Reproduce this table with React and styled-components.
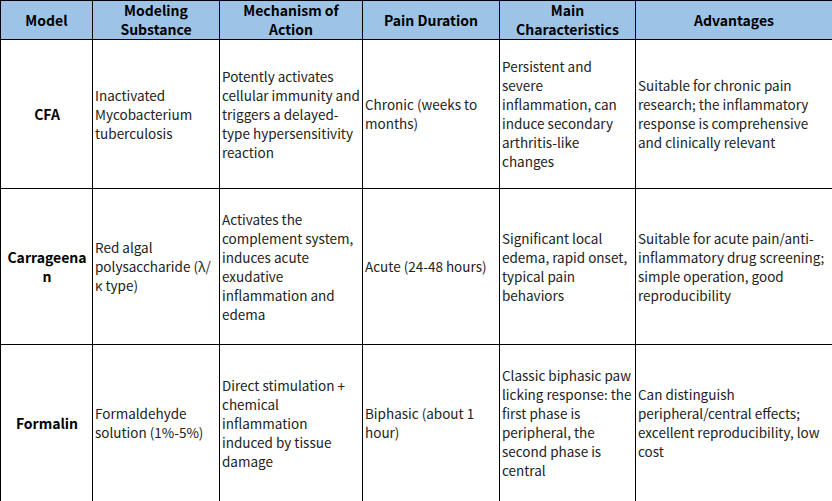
import React from 'react';
import styled, { createGlobalStyle } from 'styled-components';

const GlobalStyle = createGlobalStyle`
    html, body {
        margin: 0;
        padding: 0;
        background: #ffffff;
    }
    body {
        font-family: "Noto Sans CJK SC", "Noto Sans", sans-serif;
    }
`;

const Table = styled.table`
    width: 832px;
    table-layout: fixed;
    border-collapse: collapse;
    font-size: 13.5px;
    line-height: 19px;
    color: #222;
`;

const HeadCell = styled.th`
    background: #9dc3e6;
    border: 1px solid #000;
    height: 36px;
    padding: 0 2px;
    font-size: 14px;
    font-weight: 700;
    color: #000;
    text-align: center;
    vertical-align: middle;
`;

const Row = styled.tr`
    height: ${p => p.h}px;
`;

const Cell = styled.td`
    border: 1px solid #000;
    padding: 0 1px 0 2px;
    vertical-align: middle;
    text-align: ${p => (p.model ? 'center' : 'left')};
    font-size: ${p => (p.model ? '14px' : '13.5px')};
    font-weight: ${p => (p.model ? 700 : 400)};
    color: ${p => (p.model ? '#000' : '#222')};
    overflow-wrap: anywhere;
`;

const widths = [92, 127, 143, 137, 136, 197];

const headers = [
    'Model',
    'Modeling Substance',
    'Mechanism of Action',
    'Pain Duration',
    'Main Characteristics',
    'Advantages',
];

const rows = [
    {
        h: 149,
        cells: [
            'CFA',
            'Inactivated Mycobacterium tuberculosis',
            'Potently activates cellular immunity and triggers a delayed-type hypersensitivity reaction',
            'Chronic (weeks to months)',
            'Persistent and severe inflammation, can induce secondary arthritis-like changes',
            'Suitable for chronic pain research; the inflammatory response is comprehensive and clinically relevant',
        ],
    },
    {
        h: 156,
        cells: [
            'Carrageenan',
            'Red algal polysaccharide (λ/κ type)',
            'Activates the complement system, induces acute exudative inflammation and edema',
            'Acute (24-48 hours)',
            'Significant local edema, rapid onset, typical pain behaviors',
            'Suitable for acute pain/anti-inflammatory drug screening; simple operation, good reproducibility',
        ],
    },
    {
        h: 157,
        cells: [
            'Formalin',
            'Formaldehyde solution (1%-5%)',
            'Direct stimulation + chemical inflammation induced by tissue damage',
            'Biphasic (about 1 hour)',
            'Classic biphasic paw licking response: the first phase is peripheral, the second phase is central',
            'Can distinguish peripheral/central effects; excellent reproducibility, low cost',
        ],
    },
];

function App() {
    return (
        <>
            <GlobalStyle />
            <Table>
                <colgroup>
                    {widths.map((w, i) => <col key={i} style={{ width: w }} />)}
                </colgroup>
                <thead>
                    <tr>
                        {headers.map(h => <HeadCell key={h}>{h}</HeadCell>)}
                    </tr>
                </thead>
                <tbody>
                    {rows.map(r => (
                        <Row key={r.cells[0]} h={r.h}>
                            {r.cells.map((c, i) => (
                                <Cell key={i} model={i === 0}>{c}</Cell>
                            ))}
                        </Row>
                    ))}
                </tbody>
            </Table>
        </>
    );
}

export default App;
